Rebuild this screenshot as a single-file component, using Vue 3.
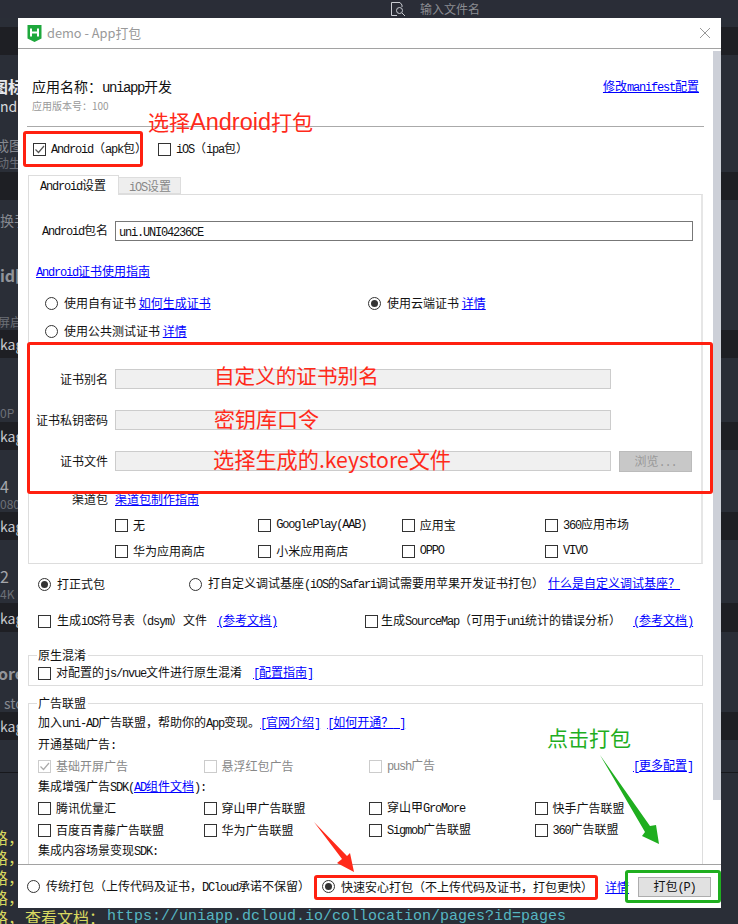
<script setup>
// 背景里编辑器露出来的行，窗口只盖住了中间
const rows = [
  { h: 9 },
  { h: 28, band: true },
  { h: 22 },
  { h: 18, text: '图标', cls: 'big', x: -8 },
  { h: 22, text: 'ndro', cls: 'white' },
  { h: 19 },
  { h: 18, text: '成图标', x: -5 },
  { h: 18, text: '动生', cls: 'small', x: -3 },
  { h: 28, band: true },
  { h: 11 },
  { h: 18, text: '换手' },
  { h: 37 },
  { h: 18, text: 'id图', cls: 'bold', x: 0 },
  { h: 29 },
  { h: 17, text: '屏启', cls: 'small', x: -2 },
  { h: 28, band: true, text: 'kag' },
  { h: 45 },
  { h: 19, text: '0P', cls: 'small' },
  { h: 28, band: true, text: 'kag' },
  { h: 27 },
  { h: 18, text: '4', cls: 'num' },
  { h: 17, text: '080', cls: 'small' },
  { h: 28, band: true, text: 'kag' },
  { h: 27 },
  { h: 18, text: '2', cls: 'num' },
  { h: 18, text: '4K', cls: 'small' },
  { h: 29, band: true, text: 'kag' },
  { h: 32 },
  { h: 18, text: 'ore', cls: 'bold', x: -2 },
  { h: 11 },
  { h: 19, text: 'sto', x: 4 },
  { h: 28, band: true, text: 'kag' },
  { h: 32 },
  { h: 1, rule: true },
  { h: 54 },
  { h: 20, text: '路，', cls: 'path', x: -8 },
  { h: 20, text: '路，', cls: 'path', x: -8 },
  { h: 20, text: '路，', cls: 'path', x: -8 },
  { h: 20, text: '路，', cls: 'path', x: -8 }
]

const adRows = [
  ['腾讯优量汇', '穿山甲广告联盟', ['穿山甲', 'GroMore'], '快手广告联盟'],
  ['百度百青藤广告联盟', '华为广告联盟', ['', 'Sigmob', '广告联盟'], ['', '360', '广告联盟']]
]
</script>

<template>
  <div class="page">
    <div class="topbar">
      <svg class="find" width="16" height="16" viewBox="0 0 16 16" fill="none" stroke="#c9ccd2">
        <path d="M10 1.5H1.5v13H7" />
        <path d="M10 1.5l2 2.5V6" />
        <circle cx="9.5" cy="9.5" r="3" />
        <path d="M12 12l3 3" />
      </svg>
      <span class="find-text">输入文件名</span>
    </div>

    <div
      v-for="(r, i) in rows"
      :key="i"
      class="row"
      :class="[r.cls, { band: r.band, rule: r.rule }]"
      :style="{ height: r.h + 'px', paddingLeft: Math.max(r.x || 0, 0) + 'px', marginLeft: Math.min(r.x || 0, 0) + 'px' }"
    >{{ r.text }}</div>
    <div class="row path last">
      <span class="cut">路，</span><span>查看文档：</span><span class="url">https://uniapp.dcloud.io/collocation/pages?id=pages</span>
    </div>

    <!-- 打包窗口 -->
    <div class="win">
      <div class="titlebar">
        <svg class="logo" width="15" height="17" viewBox="0 0 15 17">
          <path d="M0.5 0H14.5V13.5L7.5 17L0.5 13.5Z" fill="#1ea83c" />
          <path d="M4 3.5V11.5M11 3.5V11.5M4 7.5H11" stroke="#fff" stroke-width="2" fill="none" />
        </svg>
        <span class="title">demo - App打包</span>
        <svg class="close" width="12" height="12" viewBox="0 0 12 12" stroke="#999" fill="none">
          <path d="M1 1L11 11M11 1L1 11" />
        </svg>
      </div>

      <div class="body">
        <div class="head">
          <span class="app-name">应用名称：<span class="m14">uniapp</span>开发</span>
          <a class="link"><span>修改</span><span class="m">manifest</span><span>配置</span></a>
        </div>
        <div class="version">应用版本号：100</div>
        <div class="divider"></div>

        <div class="platform">
          <label class="chk">
            <span class="box">
              <svg width="11" height="11" viewBox="0 0 11 11" fill="none" stroke="#555" stroke-width="1.2"><path d="M1.5 5.5L4.5 8.5L10 2" /></svg>
            </span>
            <span><span class="m">Android</span>（<span class="m">apk</span>包）</span>
          </label>
          <label class="chk">
            <span class="box"></span>
            <span><span class="m">iOS</span>（<span class="m">ipa</span>包）</span>
          </label>
        </div>

        <div class="tabs">
          <div class="tab active"><span class="m">Android</span>设置</div>
          <div class="tab"><span class="m">iOS</span>设置</div>
        </div>

        <div class="pane">
          <div class="form-row">
            <span class="lbl"><span class="m">Android</span>包名</span>
            <div class="input"><span class="m">uni.UNI04236CE</span></div>
          </div>

          <a class="link guide"><span class="m">Android</span>证书使用指南</a>

          <div class="cert-row first">
            <label class="opt"><span class="radio"></span><span>使用自有证书 <a class="link">如何生成证书</a></span></label>
            <label class="opt"><span class="radio on"></span><span>使用云端证书 <a class="link">详情</a></span></label>
          </div>
          <div class="cert-row second">
            <label class="opt"><span class="radio"></span><span>使用公共测试证书 <a class="link">详情</a></span></label>
          </div>

          <div class="form-row field one">
            <span class="lbl">证书别名</span>
            <div class="input off"></div>
          </div>
          <div class="form-row field">
            <span class="lbl">证书私钥密码</span>
            <div class="input off"></div>
          </div>
          <div class="form-row field">
            <span class="lbl">证书文件</span>
            <div class="file-line">
              <div class="input off"></div>
              <button class="browse">浏览<span class="m">...</span></button>
            </div>
          </div>

          <div class="form-row channel">
            <span class="lbl">渠道包</span>
            <a class="link">渠道包制作指南</a>
          </div>

          <div class="store-grid">
            <label class="chk"><span class="box"></span>无</label>
            <label class="chk"><span class="box"></span><span class="m">GooglePlay(AAB)</span></label>
            <label class="chk"><span class="box"></span>应用宝</label>
            <label class="chk"><span class="box"></span><span><span class="m">360</span>应用市场</span></label>
            <label class="chk"><span class="box"></span>华为应用商店</label>
            <label class="chk"><span class="box"></span>小米应用商店</label>
            <label class="chk"><span class="box"></span><span class="m">OPPO</span></label>
            <label class="chk"><span class="box"></span><span class="m">VIVO</span></label>
          </div>
        </div>

        <div class="build-type">
          <label class="opt"><span class="radio on"></span>打正式包</label>
          <label class="opt">
            <span class="radio"></span>
            <span>打自定义调试基座<span class="m">(iOS</span>的<span class="m">Safari</span>调试需要用苹果开发证书打包）<a class="link more">什么是自定义调试基座？</a></span>
          </label>
        </div>

        <div class="symbols">
          <label class="chk wide">
            <span class="box"></span>
            <span>生成<span class="m">iOS</span>符号表（<span class="m">dsym</span>）文件<a class="link ref"><span class="m">(</span>参考文档<span class="m">)</span></a></span>
          </label>
          <label class="chk tight">
            <span class="box"></span>
            <span>生成<span class="m">SourceMap</span>（可用于<span class="m">uni</span>统计的错误分析）<a class="link ref2"><span class="m">(</span>参考文档<span class="m">)</span></a></span>
          </label>
        </div>

        <div class="group native">
          <span class="legend">原生混淆</span>
          <label class="chk">
            <span class="box"></span>
            <span>对配置的<span class="m">js/nvue</span>文件进行原生混淆<a class="link ref3"><span class="m">[</span>配置指南<span class="m">]</span></a></span>
          </label>
        </div>

        <div class="group ads">
          <span class="legend">广告联盟</span>
          <div class="line">
            加入<span class="m">uni-AD</span>广告联盟，帮助你的<span class="m">App</span>变现。<a class="link"><span class="m">[</span>官网介绍<span class="m">]</span></a><a class="link gap"><span class="m">[</span>如何开通？<span class="m"> ]</span></a>
          </div>
          <div class="line mt6">开通基础广告<span class="m">:</span></div>
          <div class="ad-grid mt6">
            <label class="chk dim">
              <span class="box">
                <svg width="11" height="11" viewBox="0 0 11 11" fill="none" stroke="#aaa" stroke-width="1.2"><path d="M1.5 5.5L4.5 8.5L10 2" /></svg>
              </span>基础开屏广告
            </label>
            <label class="chk dim"><span class="box"></span>悬浮红包广告</label>
            <label class="chk dim"><span class="box"></span><span><span class="m">push</span>广告</span></label>
            <a class="link cfg"><span class="m">[</span>更多配置<span class="m">]</span></a>
          </div>
          <div class="line mt4">集成增强广告<span class="m">SDK(</span><a class="link"><span class="m">AD</span>组件文档</a><span class="m">):</span></div>
          <div v-for="(ads, i) in adRows" :key="i" class="ad-grid mt6">
            <label v-for="(ad, j) in ads" :key="j" class="chk">
              <span class="box"></span>
              <span v-if="typeof ad === 'string'">{{ ad }}</span>
              <span v-else>{{ ad[0] }}<span class="m">{{ ad[1] }}</span>{{ ad[2] }}</span>
            </label>
          </div>
          <div class="line mt4">集成内容场景变现<span class="m">SDK:</span></div>
          <div class="ad-grid clipped">
            <label class="chk"><span class="box"></span><a class="link under">详细</a></label>
            <span></span>
            <label class="chk"><span class="box"></span><a class="link under2">详细</a></label>
          </div>
        </div>

        <div class="scrollbar"></div>
      </div>

      <div class="footer">
        <label class="opt"><span class="radio"></span><span>传统打包（上传代码及证书，<span class="m">DCloud</span>承诺不保留）</span></label>
        <label class="opt safe"><span class="radio on"></span>快速安心打包（不上传代码及证书，打包更快）</label>
        <a class="link detail">详情</a>
        <button class="pack">打包<span class="m">(P)</span></button>
      </div>
    </div>

    <!-- 截图上后加的红绿标注 -->
    <div class="mark red m-android"></div>
    <div class="mark red m-cert"></div>
    <div class="mark red m-safe"></div>
    <div class="mark green m-pack"></div>
    <div class="note n-android">选择<span class="note-en">Android</span>打包</div>
    <div class="note n-alias">自定义的证书别名</div>
    <div class="note n-pass">密钥库口令</div>
    <div class="note n-file">选择生成的.keystore文件</div>
    <div class="note n-click">点击打包</div>
    <svg class="arrows" width="738" height="924" viewBox="0 0 738 924">
      <polygon points="314,822 347,856 350,853 354,872 337,863 342,859" fill="#ff2a1a" />
      <polygon points="600,755 650,826 656,825 659,844 642,836 645,832" fill="#1fae1f" />
    </svg>
  </div>
</template>

<style>
html, body {
  margin: 0;
  background: #282c34;
}
</style>

<style scoped>
.page {
  position: relative;
  width: 738px;
  height: 924px;
  overflow: hidden;
  background: #2a2e37;
  font-family: "Noto Sans CJK SC", "Liberation Sans", sans-serif;
  font-size: 12px;
  line-height: 16px;
  color: #111;
}

/* 宋体的西文是半角宽度，用等宽字体压到 6px 一个字 */
.m {
  font-family: "Liberation Mono", monospace;
  font-size: 12px;
  letter-spacing: -1.2px;
}
.m14 {
  font-family: "Liberation Mono", monospace;
  font-size: 14px;
  letter-spacing: -1.4px;
}

.topbar {
  display: flex;
  align-items: center;
  height: 18px;
  padding-left: 390px;
  background: #2a2d37;
  box-sizing: border-box;
}
.find {
  flex: none;
}
.find-text {
  margin-left: 14px;
  color: #8a8c92;
}

.row {
  display: flex;
  align-items: center;
  box-sizing: border-box;
  white-space: nowrap;
  color: #85888f;
  font-size: 14px;
  overflow: hidden;
}
.band {
  background: #1e1f24;
  color: #c6c8cc;
}
.rule {
  background: #17181c;
}
.big {
  color: #e6e8ec;
  font-size: 16px;
  font-weight: 700;
}
.white {
  color: #d8dade;
}
.bold {
  font-size: 16px;
  font-weight: 700;
  color: #92949a;
}
.small {
  font-size: 12px;
  color: #6d7078;
}
.num {
  font-size: 16px;
  color: #a4a6ab;
}
.path {
  font-size: 16px;
  color: #d8d860;
}
.last {
  height: 20px;
  overflow: visible;
}
.cut {
  margin-left: -8px;
  width: 33px;
  flex: none;
}
.url {
  margin-left: 2px;
  font-family: "Liberation Mono", monospace;
  font-size: 15px;
  color: #56b6c2;
}

.win {
  position: absolute;
  left: 18px;
  top: 18px;
  width: 703px;
  height: 890px;
  display: flex;
  flex-direction: column;
  background: #fff;
}
.titlebar {
  display: flex;
  align-items: center;
  flex: none;
  height: 30px;
  padding-left: 9px;
  border-bottom: 1px solid #a2a2a2;
}
.title {
  margin-left: 5px;
  margin-bottom: 1px;
  font-size: 12.8px;
  color: #999;
}
.close {
  margin-left: auto;
  margin-right: 10px;
}

.body {
  position: relative;
  flex: 1;
  min-height: 0;
  overflow: hidden;
  padding: 29px 0 0 10px;
}
.scrollbar {
  position: absolute;
  top: 2px;
  right: 0;
  width: 8px;
  height: 749px;
  background: #cdd0d8;
}

.link {
  color: #00f;
  text-decoration: underline;
  white-space: nowrap;
}

.head {
  display: flex;
  justify-content: space-between;
  align-items: center;
  width: 667px;
  height: 18px;
  margin-left: 4px;
}
.app-name {
  font-size: 14px;
}
.version {
  height: 14px;
  line-height: 14px;
  margin: 3px 0 0 4px;
  font-size: 10px;
  color: #999;
}
.divider {
  width: 677px;
  height: 1px;
  margin: 13px 0 0 -1px;
  background: #aaa;
}

.chk,
.opt {
  display: flex;
  align-items: center;
  height: 16px;
  white-space: nowrap;
}
.chk {
  gap: 5px;
}
.opt {
  gap: 6px;
}
.box {
  flex: none;
  display: flex;
  align-items: center;
  justify-content: center;
  width: 13px;
  height: 13px;
  box-sizing: border-box;
  border: 1px solid #333;
}
.radio {
  flex: none;
  display: flex;
  align-items: center;
  justify-content: center;
  width: 13px;
  height: 13px;
  box-sizing: border-box;
  border: 1px solid #333;
  border-radius: 50%;
}
.radio.on::after {
  content: "";
  width: 7px;
  height: 7px;
  border-radius: 50%;
  background: #333;
}

.platform {
  display: flex;
  gap: 11px;
  margin: 14px 0 0 5px;
}

.tabs {
  display: flex;
  margin-top: 18px;
  margin-bottom: -1px;
}
.tab {
  position: relative;
  box-sizing: border-box;
  width: 62px;
  height: 17px;
  margin-top: 2px;
  padding-left: 10px;
  line-height: 15px;
  background: #eee;
  border: 1px solid #ddd;
  border-left: 0;
  color: #888;
}
.tab.active {
  width: 91px;
  height: 20px;
  margin-top: 0;
  padding-left: 11px;
  line-height: 18px;
  background: #fff;
  border-left: 1px solid #ddd;
  border-bottom: 0;
  color: #111;
}

.pane {
  box-sizing: border-box;
  width: 675px;
  padding: 26px 0 4px;
  border: 1px solid #ddd;
  border-right: 2px solid #e6e6e6;
}
.form-row {
  display: grid;
  grid-template-columns: 79px 1fr;
  column-gap: 7px;
  align-items: center;
}
.lbl {
  text-align: right;
  white-space: nowrap;
}
.input {
  box-sizing: border-box;
  width: 578px;
  height: 20px;
  padding-left: 3px;
  line-height: 18px;
  border: 1px solid #777;
}
.input.off {
  width: 496px;
  background: #f0f0f0;
  border-color: #ccc;
}
.file-line {
  display: flex;
  gap: 8px;
  height: 20px;
}
.browse {
  box-sizing: border-box;
  flex: none;
  width: 73px;
  height: 21px;
  padding: 0;
  font: inherit;
  color: #999;
  background: #c8c8c8;
  border: 1px solid #bbb;
}
.guide {
  display: block;
  width: max-content;
  height: 16px;
  margin: 22px 0 0 7px;
}
.cert-row {
  display: grid;
  grid-template-columns: 323px 1fr;
  padding-left: 16px;
}
.first {
  margin-top: 16px;
}
.second {
  margin-top: 12px;
}
.field {
  margin-top: 21px;
}
.field.one {
  margin-top: 30px;
}
.channel {
  height: 16px;
  margin-top: 20px;
}
.store-grid {
  display: grid;
  grid-template-columns: repeat(4, 143.33px);
  row-gap: 10px;
  margin-top: 10px;
  padding-left: 86px;
}

.build-type {
  display: grid;
  grid-template-columns: 151px 1fr;
  margin-top: 12px;
  padding-left: 10px;
}
.more {
  margin-left: 4px;
}
.symbols {
  display: grid;
  grid-template-columns: 327px 1fr;
  margin-top: 21px;
  padding-left: 10px;
}
.wide {
  gap: 6px;
}
.tight {
  gap: 3px;
}
.ref {
  margin-left: 10px;
}
.ref2 {
  margin-left: 12px;
}
.ref3 {
  margin-left: 11px;
}

.group {
  position: relative;
  box-sizing: border-box;
  width: 675px;
  padding: 9px 0 4px 9px;
  border: 1px solid #ddd;
}
.native {
  margin-top: 26px;
}
.ads {
  margin-top: 17px;
  padding-top: 10px;
  height: 200px;
}
.legend {
  position: absolute;
  top: -9px;
  left: 8px;
  padding: 0 2px 0 1px;
  background: #fff;
}
.line {
  height: 16px;
  white-space: nowrap;
}
.gap {
  margin-left: 7px;
}
.mt6 {
  margin-top: 6px;
}
.mt4 {
  margin-top: 4px;
}
.ad-grid {
  display: grid;
  grid-template-columns: repeat(4, 165.5px);
  grid-auto-rows: 16px;
}
.dim {
  color: #888;
}
.dim .box {
  border-color: #ccc;
}
.cfg {
  justify-self: end;
  height: 16px;
  margin-top: -1px;
  margin-right: 7px;
}
.clipped {
  margin-top: 5px;
}
.under {
  margin-left: 88px;
}
.under2 {
  margin-left: 111px;
}

.footer {
  display: flex;
  align-items: center;
  flex: none;
  box-sizing: border-box;
  height: 44px;
  padding-left: 9px;
  border-top: 1px solid #a2a2a2;
}
.safe {
  margin-left: 12px;
}
.detail {
  margin-left: 12px;
}
.pack {
  box-sizing: border-box;
  width: 73px;
  height: 20px;
  margin-left: auto;
  margin-right: 10px;
  padding: 0;
  font: inherit;
  color: #111;
  background: #e1e1e1;
  border: 1px solid #adadad;
}

.mark {
  position: absolute;
  box-sizing: border-box;
  border-radius: 3px;
  border: 3px solid #ff2010;
}
.mark.green {
  border-color: #1fae1f;
}
.m-android {
  left: 23px;
  top: 131px;
  width: 120px;
  height: 36px;
}
.m-cert {
  left: 27px;
  top: 342px;
  width: 686px;
  height: 152px;
}
.m-safe {
  left: 314px;
  top: 875px;
  width: 284px;
  height: 25px;
}
.m-pack {
  left: 625px;
  top: 870px;
  width: 96px;
  height: 33px;
}
.note {
  position: absolute;
  font-size: 21px;
  line-height: 26px;
  color: #ff2a1a;
  white-space: nowrap;
}
.note-en {
  font-family: "Liberation Sans", sans-serif;
  font-size: 23.5px;
}
.n-android {
  left: 148px;
  top: 108px;
}
.n-alias {
  left: 214px;
  top: 362px;
  font-size: 20.6px;
}
.n-pass {
  left: 214px;
  top: 405px;
}
.n-file {
  left: 213px;
  top: 446px;
  font-size: 21.2px;
}
.n-click {
  left: 547px;
  top: 724px;
  color: #1fae1f;
}
.arrows {
  position: absolute;
  left: 0;
  top: 0;
  pointer-events: none;
}
</style>
